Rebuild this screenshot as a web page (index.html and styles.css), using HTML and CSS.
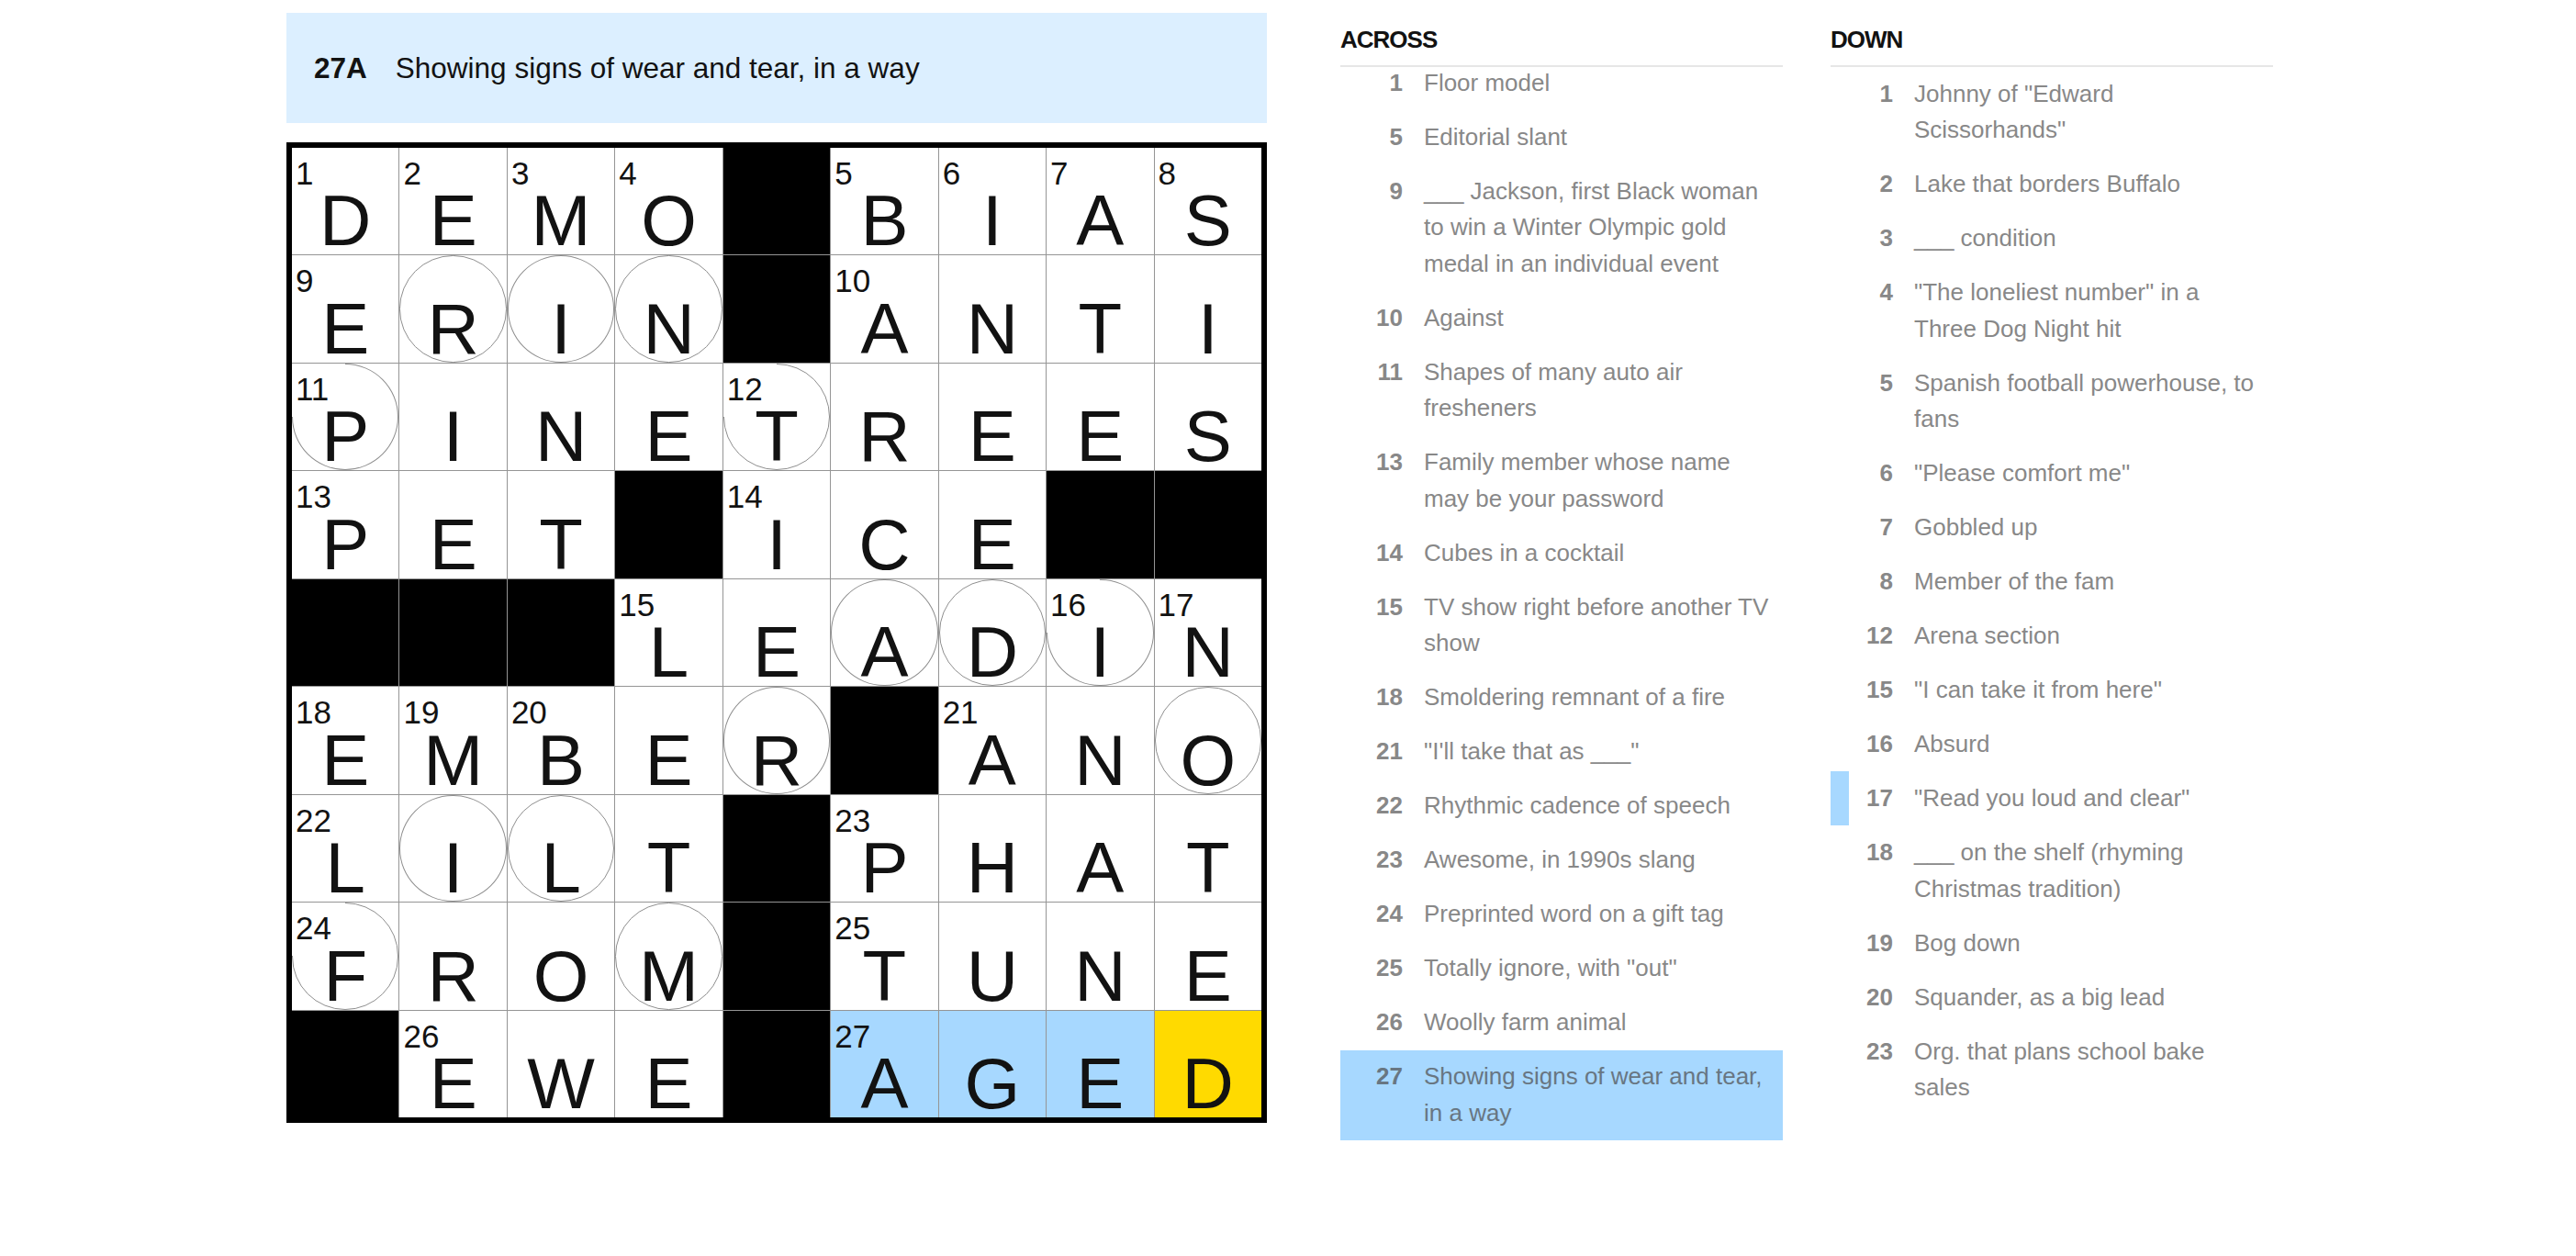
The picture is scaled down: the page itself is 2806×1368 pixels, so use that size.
FILE: index.html
```html
<!DOCTYPE html>
<html lang="en">
<head>
    <meta charset="UTF-8">
    <meta name="viewport" content="width=device-width, initial-scale=1.0">
    <title>Crossword</title>
    <link rel="stylesheet" href="styles.css">
</head>
<body>
    <div class="layout">
        <div class="puzzle">
            <div class="clue-bar">
                <span class="label">27A</span>
                <span>Showing signs of wear and tear, in a way</span>
            </div>
            <div class="board" id="board"></div>
        </div>

        <div class="clues">
            <div class="clue-list">
                <h3>Across</h3>
                <div class="clue-scroll">
                    <ol class="scrolled">
                        <li><span class="n">1</span><span>Floor model</span></li>
                        <li><span class="n">5</span><span>Editorial slant</span></li>
                        <li><span class="n">9</span><span>___ Jackson, first Black woman to win a Winter Olympic gold medal in an individual event</span></li>
                        <li><span class="n">10</span><span>Against</span></li>
                        <li><span class="n">11</span><span>Shapes of many auto air fresheners</span></li>
                        <li><span class="n">13</span><span>Family member whose name may be your password</span></li>
                        <li><span class="n">14</span><span>Cubes in a cocktail</span></li>
                        <li><span class="n">15</span><span>TV show right before another TV show</span></li>
                        <li><span class="n">18</span><span>Smoldering remnant of a fire</span></li>
                        <li><span class="n">21</span><span>"I'll take that as ___"</span></li>
                        <li><span class="n">22</span><span>Rhythmic cadence of speech</span></li>
                        <li><span class="n">23</span><span>Awesome, in 1990s slang</span></li>
                        <li><span class="n">24</span><span>Preprinted word on a gift tag</span></li>
                        <li><span class="n">25</span><span>Totally ignore, with "out"</span></li>
                        <li><span class="n">26</span><span>Woolly farm animal</span></li>
                        <li class="selected"><span class="n">27</span><span>Showing signs of wear and tear, in a way</span></li>
                    </ol>
                </div>
            </div>

            <div class="clue-list">
                <h3>Down</h3>
                <div class="clue-scroll">
                    <ol>
                        <li><span class="n">1</span><span>Johnny of "Edward Scissorhands"</span></li>
                        <li><span class="n">2</span><span>Lake that borders Buffalo</span></li>
                        <li><span class="n">3</span><span>___ condition</span></li>
                        <li><span class="n">4</span><span>"The loneliest number" in a Three Dog Night hit</span></li>
                        <li><span class="n">5</span><span>Spanish football powerhouse, to fans</span></li>
                        <li><span class="n">6</span><span>"Please comfort me"</span></li>
                        <li><span class="n">7</span><span>Gobbled up</span></li>
                        <li><span class="n">8</span><span>Member of the fam</span></li>
                        <li><span class="n">12</span><span>Arena section</span></li>
                        <li><span class="n">15</span><span>"I can take it from here"</span></li>
                        <li><span class="n">16</span><span>Absurd</span></li>
                        <li class="cross"><span class="n">17</span><span>"Read you loud and clear"</span></li>
                        <li><span class="n">18</span><span>___ on the shelf (rhyming Christmas tradition)</span></li>
                        <li><span class="n">19</span><span>Bog down</span></li>
                        <li><span class="n">20</span><span>Squander, as a big lead</span></li>
                        <li><span class="n">23</span><span>Org. that plans school bake sales</span></li>
                    </ol>
                </div>
            </div>
        </div>
    </div>

    <script>
        // '#' marks a black square
        const ROWS = [
            'DEMO#BIAS',
            'ERIN#ANTI',
            'PINETREES',
            'PET#ICE##',
            '###LEADIN',
            'EMBER#ANO',
            'LILT#PHAT',
            'FROM#TUNE',
            '#EWE#AGED'
        ];
        const CIRCLES = ['1,1', '1,2', '1,3', '2,0', '2,4', '4,5', '4,6', '4,7', '5,4', '5,8', '6,1', '6,2', '7,0', '7,3'];
        const WORD = ['8,5', '8,6', '8,7'];
        const ACTIVE = '8,8';

        const isBlock = (r, c) => r < 0 || c < 0 || r > 8 || c > 8 || ROWS[r][c] === '#';

        const board = document.getElementById('board');
        let num = 1;

        for (let r = 0; r < 9; r++) {
            for (let c = 0; c < 9; c++) {
                const cell = document.createElement('div');
                const key = `${r},${c}`;
                cell.className = 'cell';

                if (isBlock(r, c)) {
                    cell.classList.add('block');
                    board.appendChild(cell);
                    continue;
                }

                if (CIRCLES.includes(key)) cell.classList.add('circled');
                if (WORD.includes(key)) cell.classList.add('word');
                if (key === ACTIVE) cell.classList.add('active');

                const startsAcross = isBlock(r, c - 1) && !isBlock(r, c + 1);
                const startsDown = isBlock(r - 1, c) && !isBlock(r + 1, c);
                if (startsAcross || startsDown) {
                    const label = document.createElement('span');
                    label.className = 'num';
                    label.textContent = num++;
                    cell.appendChild(label);
                }

                const letter = document.createElement('span');
                letter.className = 'letter';
                letter.textContent = ROWS[r][c];
                cell.appendChild(letter);

                board.appendChild(cell);
            }
        }
    </script>
</body>
</html>
```

FILE: styles.css
```css
body {
    margin: 0;
    background: #fff;
    color: #121212;
    font-family: "Liberation Sans", Arial, sans-serif;
}
.layout {
    display: flex;
    align-items: flex-start;
    padding-left: 312px;
}

/* puzzle column */
.puzzle {
    width: 1068px;
    padding-top: 14px;
}
.clue-bar {
    display: flex;
    align-items: center;
    height: 120px;
    margin-bottom: 21px;
    padding-left: 30px;
    background: #dcefff;
    font-size: 31.5px;
}
.clue-bar .label {
    font-weight: bold;
    margin-right: 31px;
}
.board {
    display: grid;
    grid-template-columns: repeat(9, 1fr);
    grid-template-rows: repeat(9, 1fr);
    gap: 1px;
    width: 1056px;
    height: 1056px;
    border: 6px solid #000;
    background: #959595;
}
.cell {
    position: relative;
    display: flex;
    justify-content: center;
    align-items: flex-end;
    background: #fff;
}
.cell.block {
    background: #000;
}
.cell.word {
    background: #a7d8ff;
}
.cell.active {
    background: #ffda00;
}
.cell.circled::before {
    content: "";
    position: absolute;
    top: 0;
    left: 0;
    right: 0;
    bottom: 0;
    border: 1px solid #8f8f8f;
    border-radius: 50%;
}
.num {
    position: absolute;
    top: 0;
    left: 0;
    width: 50%;
    height: 50%;
    box-sizing: border-box;
    padding: 10px 0 0 4px;
    background: inherit;
    font-size: 35px;
    line-height: 35px;
}
.letter {
    position: relative;
    font-size: 78px;
    line-height: 1;
    margin-bottom: -2px;
}

/* clue lists */
.clues {
    display: flex;
    gap: 52px;
    margin-left: 80px;
}
.clue-list {
    width: 482px;
    padding-top: 23px;
}
.clue-list h3 {
    margin: 0;
    padding-bottom: 8px;
    border-bottom: 2px solid #e6e6e6;
    font-size: 26px;
    line-height: 40px;
    letter-spacing: -1px;
    text-transform: uppercase;
}
.clue-scroll {
    overflow: hidden;
}
.clue-list ol {
    list-style: none;
    margin: 0;
    padding: 0;
}
.clue-list ol.scrolled {
    margin-top: -12px;
}
.clue-list li {
    display: grid;
    grid-template-columns: 48px 1fr;
    column-gap: 23px;
    padding: 9.7px 12px 9.7px 0;
    border-left: 20px solid transparent;
    color: #888;
    font-size: 26px;
    line-height: 39.6px;
}
.clue-list li .n {
    font-weight: bold;
    text-align: right;
}
.clue-list li.selected {
    background: #a7d8ff;
    color: #687682;
}
.clue-list li.cross {
    border-left-color: #a7d8ff;
}
```
